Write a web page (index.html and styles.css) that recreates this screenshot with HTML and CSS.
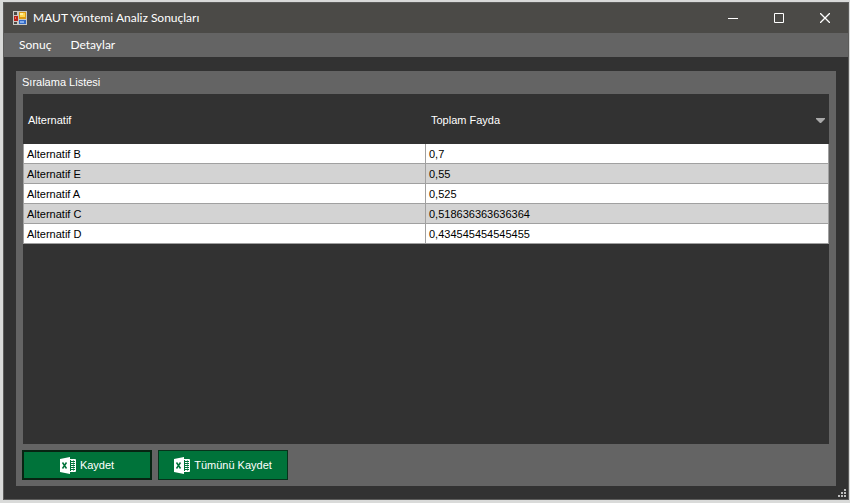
FILE: index.html
```html
<!DOCTYPE html>
<html lang="tr">
<head>
<meta charset="utf-8">
<title>MAUT Yöntemi Analiz Sonuçları</title>
<link rel="stylesheet" href="styles.css">
</head>
<body>
<div class="window">
  <header class="titlebar">
    <svg class="app-icon" width="14" height="14" viewBox="0 0 14 14" aria-hidden="true">
      <path fill="#c9c9c5" d="M0 0h14v14H0z"/>
      <path fill="#4b4a47" d="M1 1h3v3H1zM1 11h3v2H1z"/>
      <path fill="#b9231c" d="M1 5h4v5H1z"/>
      <path fill="#ee765f" d="M2 6h1v2H2z"/>
      <path fill="#dc9a12" d="M6 1h7v7H6z"/>
      <path fill="#ffd84e" d="M7 2h5v4H7z"/>
      <path fill="#fff0a0" d="M7 2h3v2H7z"/>
      <path fill="#3469c4" d="M6 9h7v4H6z"/>
      <path fill="#83aeee" d="M7 10h4v2H7z"/>
    </svg>
    <h1 class="title">MAUT Yöntemi Analiz Sonuçları</h1>
    <div class="window-controls">
      <button class="control" type="button" aria-label="Simge durumuna küçült"><svg width="10" height="10" viewBox="0 0 10 10"><path d="M0 5.5h10"/></svg></button>
      <button class="control" type="button" aria-label="Ekranı kapla"><svg width="10" height="10" viewBox="0 0 10 10"><path d="M.5.5h9v9h-9z"/></svg></button>
      <button class="control" type="button" aria-label="Kapat"><svg width="10" height="10" viewBox="0 0 10 10"><path stroke-width="1.3" d="M0 0l10 10M10 0L0 10"/></svg></button>
    </div>
  </header>
  <nav class="menu">
    <button class="menu-item" type="button">Sonuç</button>
    <button class="menu-item" type="button">Detaylar</button>
  </nav>
  <main class="client">
    <section class="panel">
      <h2 class="panel-title">Sıralama Listesi</h2>
      <div class="grid">
        <table class="results">
          <thead>
            <tr>
              <th scope="col">Alternatif</th>
              <th scope="col" aria-sort="descending"><div class="sorted">Toplam Fayda<svg width="9" height="5" viewBox="0 0 9 5" aria-hidden="true"><path fill="#a9a9a9" d="M0 0h9v1L5 5H4L0 1z"/></svg></div></th>
            </tr>
          </thead>
          <tbody>
            <tr><td>Alternatif B</td><td>0,7</td></tr>
            <tr><td>Alternatif E</td><td>0,55</td></tr>
            <tr><td>Alternatif A</td><td>0,525</td></tr>
            <tr><td>Alternatif C</td><td>0,518636363636364</td></tr>
            <tr><td>Alternatif D</td><td>0,434545454545455</td></tr>
          </tbody>
        </table>
      </div>
      <div class="actions">
        <button class="save save-default" type="button">
          <svg width="16" height="17" viewBox="0 0 16 17" aria-hidden="true"><path fill="#fff" d="M0 2l10-2v17L0 15z"/><path fill="none" stroke="#fff" d="M10 2.5h5.5v12H10"/><path stroke="#fff" stroke-width="2" stroke-dasharray="1 1" d="M12 3v11M14.5 3v11"/><path fill="none" stroke="#00733a" stroke-width="1.5" d="M2.5 5.5l4 6M6.5 5.5l-4 6"/></svg>
          Kaydet
        </button>
        <button class="save" type="button">
          <svg width="16" height="17" viewBox="0 0 16 17" aria-hidden="true"><path fill="#fff" d="M0 2l10-2v17L0 15z"/><path fill="none" stroke="#fff" d="M10 2.5h5.5v12H10"/><path stroke="#fff" stroke-width="2" stroke-dasharray="1 1" d="M12 3v11M14.5 3v11"/><path fill="none" stroke="#00733a" stroke-width="1.5" d="M2.5 5.5l4 6M6.5 5.5l-4 6"/></svg>
          Tümünü Kaydet
        </button>
      </div>
    </section>
  </main>
  <svg class="resize-grip" width="8" height="8" viewBox="0 0 8 8" aria-hidden="true"><path fill="#bdbdbd" d="M6 0h2v2H6zM3 3h2v2H3zM6 3h2v2H6zM0 6h2v2H0zM3 6h2v2H3zM6 6h2v2H6z"/></svg>
</div>
</body>
</html>
```
FILE: styles.css
```css
* {
  box-sizing: border-box;
}

body {
  display: flex;
  min-height: 100vh;
  margin: 0;
  padding: 2px 1px 3px 3px;
  background: #d9dad9;
  color: #fff;
  font: 11px/14px "Liberation Sans", Arial, sans-serif;
}

button {
  border: 0;
  background: none;
  color: inherit;
  font: inherit;
}

.window {
  position: relative;
  display: flex;
  flex: 1;
  flex-direction: column;
  border: 1px solid #5c5c5b;
  background: #323232;
}

.titlebar {
  display: flex;
  align-items: center;
  height: 30px;
  padding-left: 9px;
  background: #4b4a47;
}

.title {
  flex: 1;
  margin: 0 0 0 6px;
  font: 12px/16px Lato, "Open Sans", sans-serif;
}

.window-controls {
  display: flex;
  align-self: stretch;
}

.control {
  display: grid;
  place-items: center;
  width: 46px;
  padding: 0;
}

.control path {
  fill: none;
  stroke: #fff;
}

.menu {
  display: flex;
  height: 24px;
  padding-left: 9px;
  background: #646464;
}

.menu-item {
  padding: 0 6px;
  margin-right: 7px;
  font: 12px/16px Lato, "Open Sans", sans-serif;
}

.client {
  display: flex;
  flex: 1;
  padding: 14px 12px 13px;
}

.panel {
  display: flex;
  flex: 1;
  flex-direction: column;
  padding: 4px 7px 6px;
  background: #646464;
}

.panel-title {
  margin: 0 0 5px -1px;
  font: inherit;
}

.grid {
  flex: 1;
  background: #323232;
}

.results {
  width: 100%;
  table-layout: fixed;
  border-spacing: 0;
}

.results th {
  height: 50px;
  padding: 2px 4px 0 5px;
  font-weight: 400;
  text-align: left;
}

.sorted {
  display: flex;
  align-items: center;
  justify-content: space-between;
}

.results td {
  height: 20px;
  padding: 1px 3px 0;
  border-right: 1px solid #a0a0a0;
  border-bottom: 1px solid #a0a0a0;
  background: #fff;
  color: #000;
}

.results td:first-child {
  border-left: 1px solid #a0a0a0;
}

.results tr:nth-child(even) td {
  background: #d3d3d3;
}

.actions {
  display: flex;
  gap: 6px;
  margin: 6px -1px 0;
}

.save {
  display: flex;
  align-items: center;
  justify-content: center;
  gap: 4px;
  width: 130px;
  height: 30px;
  padding: 0;
  border: 1px solid #07331b;
  background: #00733a;
}

.save-default {
  border-width: 2px;
  border-color: #072412;
}

.resize-grip {
  position: absolute;
  right: 2px;
  bottom: 2px;
}
```
